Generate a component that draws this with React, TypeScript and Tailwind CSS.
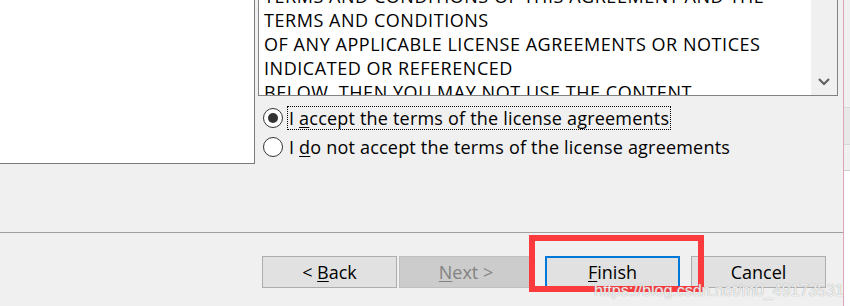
import React from "react";

// License page of an install wizard: terms box, accept radios, wizard buttons.

const LICENSE_LINES = [
  "TERMS AND CONDITIONS OF THIS AGREEMENT AND THE",
  "TERMS AND CONDITIONS",
  "OF ANY APPLICABLE LICENSE AGREEMENTS OR NOTICES",
  "INDICATED OR REFERENCED",
  "BELOW, THEN YOU MAY NOT USE THE CONTENT",
];

const FONT = { fontFamily: '"Open Sans", "Noto Sans", sans-serif' };

function Radio({ checked, focused, children }: { checked: boolean; focused?: boolean; children: React.ReactNode }) {
  return (
    <div className="flex h-[24px] items-center">
      <span className="flex h-[20px] w-[20px] items-center justify-center rounded-full border border-[#333333] bg-white">
        {checked && <span className="h-[10px] w-[10px] rounded-full bg-[#333333]" />}
      </span>
      <span
        className={
          "ml-[4px] flex h-[24px] items-center px-[1px] text-[18px] leading-none tracking-[0.2px] text-black " +
          (focused ? "border border-dotted border-black" : "border border-transparent")
        }
      >
        {children}
      </span>
    </div>
  );
}

function WizardButton({
  children,
  disabled,
  primary,
  width = "w-[135px]",
}: {
  children: React.ReactNode;
  disabled?: boolean;
  primary?: boolean;
  width?: string;
}) {
  return (
    <button
      type="button"
      className={
        "flex h-[32px] items-center justify-center text-[18px] leading-none " +
        width +
        " " +
        (disabled
          ? "border border-[#bfbfbf] bg-[#cccccc] text-[#838383]"
          : primary
          ? "border-2 border-[#0078d7] bg-[#e1e1e1] text-black"
          : "border border-[#adadad] bg-[#e1e1e1] text-black")
      }
    >
      {children}
    </button>
  );
}

export default function App() {
  return (
    <div className="relative flex h-[306px] w-[850px] overflow-hidden bg-[#f0f0f0]" style={FONT}>
      <div className="flex w-[843px] flex-col">
        {/* upper area */}
        <div className="flex h-[232px]">
          <div className="h-[164px] w-[255px] border-r border-b border-[#7a7a7a] bg-white" />
          <div className="ml-[3px] flex w-[580px] flex-col">
            <div className="flex h-[96px] overflow-hidden border-x border-b border-[#828282] bg-white">
              <div className="flex-1 overflow-hidden pl-[5px]">
                <div className="-mt-[16px]">
                  {LICENSE_LINES.map((l) => (
                    <div
                      key={l}
                      className="h-[24px] whitespace-pre text-[18px] leading-[24px] tracking-[0.55px] text-black"
                    >
                      {l}
                    </div>
                  ))}
                </div>
              </div>
              <div className="flex w-[26px] flex-col justify-end bg-[#f0f0f0] pb-[8px]">
                <svg width="26" height="10" viewBox="0 0 26 10">
                  <path d="M8 2 L13 7 L18 2" fill="none" stroke="#606060" strokeWidth="2.2" />
                </svg>
              </div>
            </div>
            <div className="mt-[10px] flex flex-col gap-[5px] pl-[5px]">
              <Radio checked focused>
                I&nbsp;<span className="underline underline-offset-2">a</span>ccept the terms of the license agreements
              </Radio>
              <Radio checked={false}>
                I&nbsp;<span className="underline underline-offset-2">d</span>o not accept the terms of the license agreements
              </Radio>
            </div>
          </div>
        </div>
        <div className="h-px bg-[#a0a0a0]" />
        {/* button bar */}
        <div className="flex justify-end pt-[23px] pr-[17px]">
          <WizardButton>
            &lt;&nbsp;<span className="underline underline-offset-2">B</span>ack
          </WizardButton>
          <div className="ml-[2px]">
            <WizardButton disabled width="w-[134px]">
              <span className="underline underline-offset-2">N</span>ext &gt;
            </WizardButton>
          </div>
          <div className="ml-[12px]">
            <WizardButton primary>
              <span className="underline underline-offset-2">F</span>inish
            </WizardButton>
          </div>
          <div className="ml-[11px]">
            <WizardButton>Cancel</WizardButton>
          </div>
        </div>
      </div>
      {/* neighbouring window edge */}
      <div className="flex flex-1 flex-col border-l border-[#d8a8b8]">
        <div className="h-[107px]" />
        <div className="h-[38px] border-y border-[#d8d8d8] bg-[#e8e8e8]" />
        <div className="h-[25px]" />
        <div className="flex-1 border-t border-[#d0d0d0] bg-white" />
      </div>

      {/* annotation overlay */}
      <div className="absolute left-[529px] top-[235px] h-[57px] w-[175px] border-[6px] border-[#fb3a3d]" />
      <div
        className="absolute left-[594px] top-[283px] whitespace-nowrap text-[16px] leading-none text-white/85"
        style={{ fontFamily: '"Liberation Sans", Arial, sans-serif', textShadow: "0 0 1px #8a8a8a" }}
      >
        https://blog.csdn.net/m0_49173531
      </div>
    </div>
  );
}
